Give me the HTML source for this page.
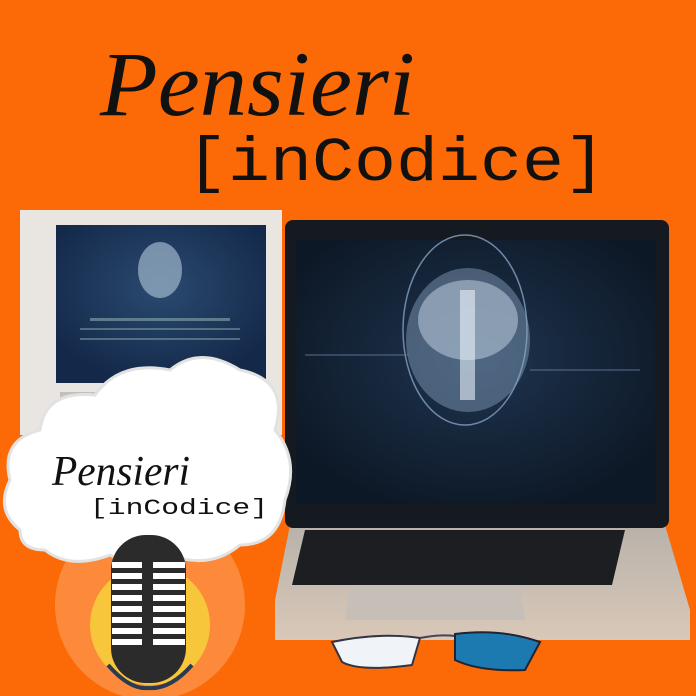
<!DOCTYPE html>
<html><head><meta charset="utf-8"><style>
html,body{margin:0;padding:0;width:696px;height:696px;overflow:hidden;background:#fb6a06}
svg{display:block}
</style></head><body>
<svg width="696" height="696" viewBox="0 0 696 696" xmlns="http://www.w3.org/2000/svg">
<defs>
<radialGradient id="scr" cx="50%" cy="45%" r="60%"><stop offset="0" stop-color="#1f3550"/><stop offset="1" stop-color="#0d1826"/></radialGradient>
<radialGradient id="scr2" cx="50%" cy="40%" r="60%"><stop offset="0" stop-color="#2a4a70"/><stop offset="1" stop-color="#14294a"/></radialGradient>
<linearGradient id="base" x1="0" y1="0" x2="0" y2="1"><stop offset="0" stop-color="#b8b2aa"/><stop offset="1" stop-color="#d9c8b8"/></linearGradient>
</defs>
<rect width="696" height="696" fill="#fb6a06"/>
<text x="100" y="115" font-family="Liberation Serif, serif" font-style="italic" font-size="92" fill="#111" textLength="315" lengthAdjust="spacingAndGlyphs">Pensieri</text>
<text x="186" y="180" font-family="Liberation Mono, monospace" font-size="62" fill="#111" textLength="420" lengthAdjust="spacingAndGlyphs">[inCodice]</text>
<rect x="20" y="210" width="262" height="225" fill="#e9e6e2"/>
<rect x="56" y="225" width="210" height="158" fill="url(#scr2)"/>
<ellipse cx="160" cy="270" rx="22" ry="28" fill="#9fb6cc" opacity=".7"/>
<rect x="90" y="318" width="140" height="3" fill="#8aa" opacity=".6"/>
<rect x="80" y="328" width="160" height="2" fill="#8aa" opacity=".5"/>
<rect x="80" y="338" width="160" height="2" fill="#8aa" opacity=".5"/>
<rect x="60" y="392" width="100" height="6" fill="#999" opacity=".5"/>
<path d="M275 600 L290 525 L665 525 L690 610 L690 640 L275 640 Z" fill="url(#base)"/>
<path d="M305 530 L625 530 L612 585 L292 585 Z" fill="#1c1e22"/>
<path d="M350 588 L520 588 L525 620 L345 620 Z" fill="#c6bfb7"/>
<rect x="285" y="220" width="384" height="308" rx="8" fill="#151a20"/>
<rect x="296" y="240" width="360" height="264" fill="url(#scr)"/>
<ellipse cx="465" cy="330" rx="62" ry="95" fill="none" stroke="#6e8aa8" stroke-width="1.5"/>
<ellipse cx="468" cy="340" rx="62" ry="72" fill="#8aa4c0" opacity=".45"/>
<ellipse cx="468" cy="320" rx="50" ry="40" fill="#c8d8e8" opacity=".5"/>
<rect x="460" y="290" width="15" height="110" fill="#e8f0f8" opacity=".6"/>
<line x1="305" y1="355" x2="410" y2="355" stroke="#5a7090"/>
<line x1="530" y1="370" x2="640" y2="370" stroke="#5a7090"/>
<path d="M332 642 Q380 632 420 638 L412 665 Q360 672 342 662 Z" fill="#f0f4f8" stroke="#334" stroke-width="2"/>
<path d="M420 638 Q440 634 455 636" stroke="#445" stroke-width="2" fill="none"/>
<path d="M455 634 Q500 628 540 642 L525 670 Q480 672 455 660 Z" fill="#1d7ab0" stroke="#223" stroke-width="2"/>
<circle cx="150" cy="605" r="95" fill="#fd8a3a"/>
<circle cx="150" cy="625" r="60" fill="#f8c63a"/>
<g fill="#fff" stroke="#e2e2e2" stroke-width="3">
<path d="M20 530 Q-5 510 10 480 Q0 440 40 430 Q45 390 95 395 Q120 360 170 370 Q200 345 240 370 Q290 380 275 430 Q300 460 285 500 Q280 545 240 545 Q210 570 170 555 Q140 570 110 555 Q70 570 45 550 Q20 550 20 530 Z"/>
</g>
<text x="52" y="485" font-family="Liberation Serif, serif" font-style="italic" font-size="42" fill="#111" textLength="138" lengthAdjust="spacingAndGlyphs">Pensieri</text>
<text x="90" y="514" font-family="Liberation Mono, monospace" font-size="22" fill="#111" textLength="178" lengthAdjust="spacingAndGlyphs">[inCodice]</text>
<path d="M108 665 Q130 690 148 688 Q170 690 192 665" fill="none" stroke="#2a3a55" stroke-width="4"/>
<rect x="111" y="535" width="75" height="148" rx="35" fill="#2b2b2b"/>
<g fill="#fff">
<rect x="112" y="562" width="30" height="6"/><rect x="153" y="562" width="32" height="6"/>
<rect x="112" y="573" width="30" height="6"/><rect x="153" y="573" width="32" height="6"/>
<rect x="112" y="584" width="30" height="6"/><rect x="153" y="584" width="32" height="6"/>
<rect x="112" y="595" width="30" height="6"/><rect x="153" y="595" width="32" height="6"/>
<rect x="112" y="606" width="30" height="6"/><rect x="153" y="606" width="32" height="6"/>
<rect x="112" y="617" width="30" height="6"/><rect x="153" y="617" width="32" height="6"/>
<rect x="112" y="628" width="30" height="6"/><rect x="153" y="628" width="32" height="6"/>
<rect x="112" y="639" width="30" height="6"/><rect x="153" y="639" width="32" height="6"/>
</g>
</svg>
</body></html>
